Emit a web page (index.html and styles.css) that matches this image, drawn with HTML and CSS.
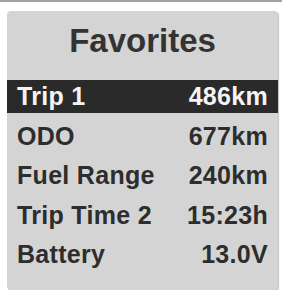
FILE: index.html
```html
<!DOCTYPE html>
<html lang="en">
<head>
    <meta charset="UTF-8">
    <meta name="viewport" content="width=device-width, initial-scale=1.0">
    <title>Favorites</title>
    <link rel="stylesheet" href="styles.css">
</head>
<body>

<div class="top-line"></div>

<div class="panel">
    <h1 class="title">Favorites</h1>

    <div class="row selected"><span>Trip 1</span><span>486km</span></div>
    <div class="row"><span>ODO</span><span>677km</span></div>
    <div class="row"><span>Fuel Range</span><span>240km</span></div>
    <div class="row"><span>Trip Time 2</span><span>15:23h</span></div>
    <div class="row"><span>Battery</span><span>13.0V</span></div>
</div>

</body>
</html>
```

FILE: styles.css
```css
body {
    margin: 0;
    background-color: #fff;
    font-family: 'Liberation Sans', Arial, sans-serif;
    font-weight: bold;
    color: #2d2d2d;
}

.top-line {
    height: 2px;
    background-color: #a3a3a3;
}

.panel {
    margin: 9px 0 0 7px;
    width: 271px;
    padding: 10px 0 19px;
    background-color: #d4d4d4;
    border-radius: 4px;
    box-shadow: 1px 1px 1px #c4c4c4;
}

.title {
    margin: 0 0 19px;
    font-size: 33px;
    line-height: 40px;
    text-align: center;
    color: #333;
}

.row {
    display: flex;
    justify-content: space-between;
    height: 33px;
    padding: 0 10px 0 10px;
    font-size: 25px;
    letter-spacing: 0.3px;
    line-height: 33px;
    margin-top: 6.5px;
}

.row.selected {
    margin-top: 0;
    background-color: #2a2a2a;
    color: #f4f4f4;
}
```
